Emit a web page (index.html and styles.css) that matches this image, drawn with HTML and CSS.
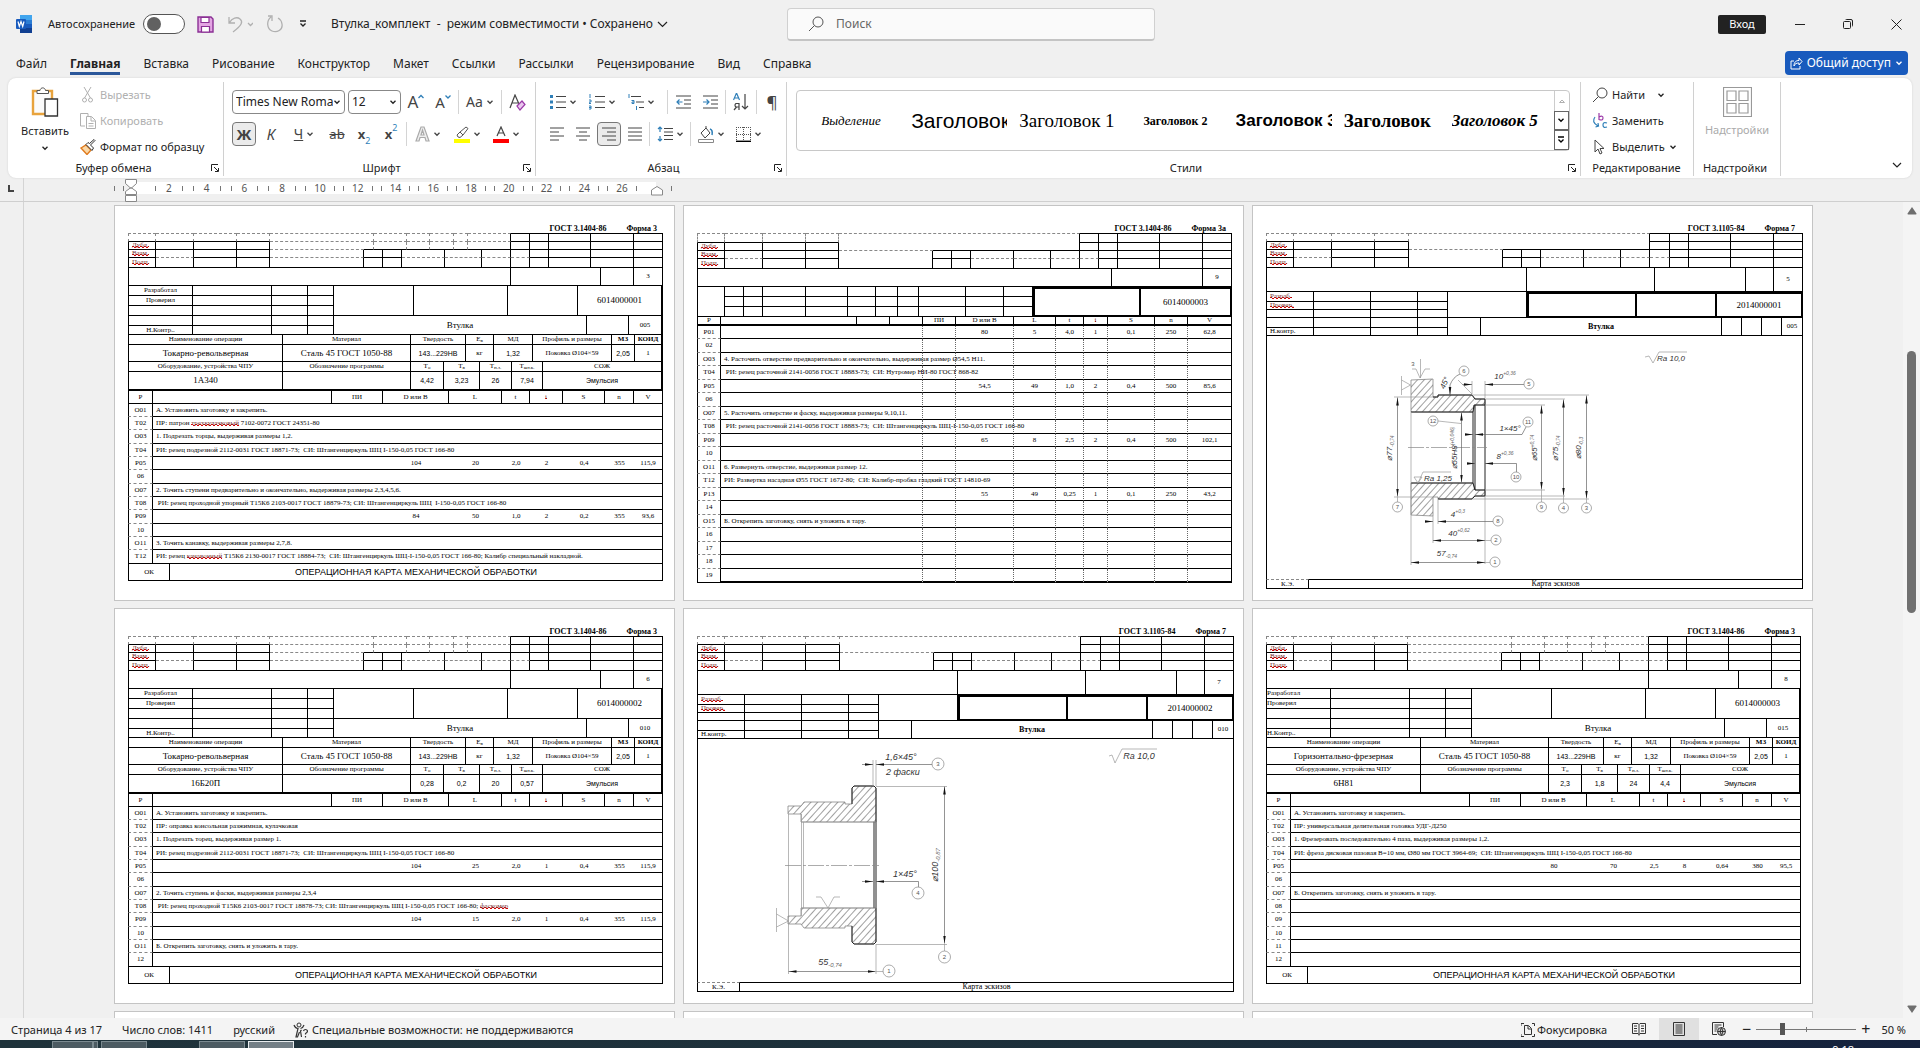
FILE: index.html
```html
<!DOCTYPE html>
<html lang="ru">
<head>
<meta charset="utf-8">
<title>Втулка_комплект</title>
<link rel="stylesheet" href="styles.css">
</head>
<body>
<svg class="defs" aria-hidden="true">
  <defs>
    <symbol id="chev" viewBox="0 0 8 8"><path d="M1.5 2.8 4 5.3 6.5 2.8" fill="none" stroke="currentColor" stroke-width="1.3"/></symbol>
    <symbol id="launch" viewBox="0 0 8 8"><path d="M.5 7V.5H7M3 3l4 4M7.5 4v3.5H4" fill="none" stroke="currentColor"/></symbol>
    <marker id="arr" viewBox="0 0 8 4" markerWidth="8" markerHeight="4" refX="8" refY="2" orient="auto-start-reverse" markerUnits="userSpaceOnUse"><path d="M0 .7 8 2 0 3.3z" fill="#111"/></marker>
    <pattern id="hatch" width="5" height="5" patternUnits="userSpaceOnUse" patternTransform="rotate(42)"><path d="M.5 0V5" stroke="#777" stroke-width=".7"/></pattern>
  </defs>
</svg>
<div class="app">
  <header class="titlebar">
    <div class="quick">
      <svg class="word" viewBox="0 0 16 18"><path d="M4 0h12v5H4z" fill="#41a5ee"/><path d="M4 5h12v4H4z" fill="#2b7cd3"/><path d="M4 9h12v4H4z" fill="#185abd"/><path d="M4 13h12v5H4z" fill="#103f91"/><rect y="4" width="10" height="10" rx="1" fill="#185abd"/><path d="m2 6.500 1.300 5 1.700-5 1.700 5 1.300-5" fill="none" stroke="#fff" stroke-width="1.200"/></svg>
      <label for="autosave">Автосохранение</label>
      <input class="toggle" type="checkbox" role="switch" id="autosave">
      <button class="icon" aria-label="Сохранить"><svg width="17" height="17" viewBox="0 0 17 17"><path d="M1 1h13l2 2v13H1z" fill="#e3a5e3" stroke="#8a2f94" stroke-width="1.400"/><path d="M4 1.500h8v5H4zM4.500 16v-5.500h8V16z" fill="#fff" stroke="#8a2f94" stroke-width="1.200"/></svg></button>
      <button class="icon dim" aria-label="Отменить"><svg width="26" height="18" viewBox="0 0 26 18"><path d="M2 2v6h6M2.500 7.500C5 3 10 1.500 13 4s2.500 6-7 13" fill="none" stroke="currentColor" stroke-width="1.300"/><path d="m21 8 2.500 2.500L26 8" fill="none" stroke="currentColor" stroke-width="1.300"/></svg></button>
      <button class="icon dim" aria-label="Повторить"><svg width="18" height="18" viewBox="0 0 18 18"><path d="M2 1h4v5M5 2C0 6 1 14 6 16s11-1 10-7c-.5-3-2-5-4-6" fill="none" stroke="currentColor" stroke-width="1.300"/></svg></button>
      <button class="icon" aria-label="Настройка панели"><svg width="8" height="8" viewBox="0 0 8 8"><path d="M1 1h6M1.500 3.500 4 6l2.500-2.500" fill="none" stroke="currentColor" stroke-width="1.300"/></svg></button>
    </div>
    <button class="doc-name">Втулка_комплект&nbsp; -&nbsp; режим совместимости • Сохранено <svg width="11" height="9" viewBox="0 0 11 9"><path d="m1 2 4.500 4.500L10 2" fill="none" stroke="currentColor" stroke-width="1.200"/></svg></button>
    <div class="search">
      <svg width="16" height="16" viewBox="0 0 16 16"><circle cx="10" cy="6" r="5" fill="none" stroke="#555"/><path d="M6.500 9.500 1 15" stroke="#555"/></svg>
      <input type="search" aria-label="Поиск" placeholder="Поиск">
    </div>
    <button class="login">Вход</button>
    <div class="window">
      <button class="icon" aria-label="Свернуть"><svg width="10" height="10" viewBox="0 0 10 10"><path d="M0 5.500h10" stroke="currentColor"/></svg></button>
      <button class="icon" aria-label="Восстановить"><svg width="10" height="10" viewBox="0 0 10 10"><path d="M.5 3.500q0-1 1-1h5q1 0 1 1v5q0 1-1 1h-5q-1 0-1-1zM2.500 1q.2-.5 1-.5H8q1.500 0 1.500 1.500v4.500q0 .8-.5 1" fill="none" stroke="currentColor"/></svg></button>
      <button class="icon" aria-label="Закрыть"><svg width="11" height="11" viewBox="0 0 11 11"><path d="m.5.5 10 10m0-10-10 10" stroke="currentColor"/></svg></button>
    </div>
  </header>

  <nav class="tabs">
    <a href="#file">Файл</a><a href="#home" class="current">Главная</a><a href="#insert">Вставка</a><a href="#draw">Рисование</a><a href="#design">Конструктор</a><a href="#layout">Макет</a><a href="#refs">Ссылки</a><a href="#mail">Рассылки</a><a href="#review">Рецензирование</a><a href="#view">Вид</a><a href="#help">Справка</a>
    <button class="share"><svg width="13" height="13" viewBox="0 0 13 13"><path d="M4 4H1v8h9V9M4 9c0-4 2-5.500 5-5.500V1l3 3.500L9 8V6C6.500 6 5 6.500 4 9z" fill="none" stroke="#fff"/></svg>Общий доступ<svg class="chev"><use href="#chev"/></svg></button>
  </nav>

  <div class="ribbon">
    <section class="group clipboard">
      <div class="body">
        <button class="paste"><svg width="28" height="31" viewBox="0 0 28 31"><path d="M2 4h19v23H2z" fill="#fbfbfb" stroke="#e8a33d" stroke-width="2.400"/><path d="M6 6.500V3.500h3C9.500 0 14 0 14.500 3.500h3v3z" fill="#fff" stroke="#555"/><path d="M14 12h12.500v17H14z" fill="#fff" stroke="#333" stroke-width="1.300"/></svg>Вставить<svg class="chev"><use href="#chev"/></svg></button>
        <div class="stack">
          <button class="row dim"><svg width="16" height="16" viewBox="0 0 16 16"><path d="M4 0l6.500 11M11 0 4.500 11" stroke="currentColor"/><circle cx="4.500" cy="13" r="2" fill="none" stroke="currentColor"/><circle cx="10.500" cy="13" r="2" fill="none" stroke="currentColor"/></svg>Вырезать</button>
          <button class="row dim"><svg width="16" height="16" viewBox="0 0 16 16"><path d="M5 13H.5V.5H8V4M6.500 3.500h5l4 4v8h-9zM11 4v4h4M8.500 10.500h5M8.500 13h5" fill="none" stroke="currentColor"/></svg>Копировать</button>
          <button class="row"><svg width="16" height="16" viewBox="0 0 16 16"><path d="M1 9l5-3 5 5-4 4.500z" fill="#fbd9a8" stroke="#e07a1c" stroke-width="1.400"/><path d="M6 5.500 12 11.500 13.500 9 10.500 6 15 1.500 14 .5 9.500 4.500 8 3.500z" fill="#fff" stroke="#333"/></svg>Формат по образцу</button>
        </div>
      </div>
      <footer>Буфер обмена<svg class="launch"><use href="#launch"/></svg></footer>
    </section>

    <section class="group font">
      <div class="body">
        <div class="tools">
          <div class="pick family"><select aria-label="Шрифт"><option>Times New Roman</option></select><svg class="chev"><use href="#chev"/></svg></div>
          <div class="pick size"><select aria-label="Размер"><option>12</option></select><svg class="chev"><use href="#chev"/></svg></div>
          <button class="t big" aria-label="Увеличить размер">A<svg class="caret" viewBox="0 0 6 6"><path d="M.5 4 3 1.500 5.500 4" fill="none" stroke="#2f7fb8" stroke-width="1.300"/></svg></button>
          <button class="t" aria-label="Уменьшить размер">A<svg class="caret" viewBox="0 0 6 6"><path d="M.5 1.500 3 4l2.500-2.500" fill="none" stroke="#2f7fb8" stroke-width="1.300"/></svg></button>
          <i class="sep"></i>
          <button class="t wide">Aa<svg class="chev"><use href="#chev"/></svg></button>
          <i class="sep"></i>
          <button class="t" aria-label="Очистить формат"><svg width="17" height="17" viewBox="0 0 17 17"><path d="M1 14 6 1l4 9M3 9h6" fill="none" stroke="#444" stroke-width="1.200"/><path d="m8 12 5-5 3 3.500-5 5.500z" fill="#e9c7ee" stroke="#9b3aa8" stroke-width="1.200"/></svg></button>
        </div>
        <div class="tools">
          <button class="t on"><b>Ж</b></button>
          <button class="t"><em>К</em></button>
          <button class="t wide"><u>Ч</u><svg class="chev"><use href="#chev"/></svg></button>
          <button class="t small"><s>ab</s></button>
          <button class="t small"><b>x</b><sub class="blue">2</sub></button>
          <button class="t small"><b>x</b><sup class="blue">2</sup></button>
          <i class="sep"></i>
          <button class="t wide dim" aria-label="Эффекты"><svg width="15" height="16" viewBox="0 0 15 16"><path d="m1 15 5-14h3l5 14h-3l-1-3.500H5L4 15zM6 9h3L7.500 4z" fill="#eee" stroke="#aaa" stroke-width="1.200"/></svg><svg class="chev"><use href="#chev"/></svg></button>
          <button class="t wide" aria-label="Цвет выделения"><svg width="16" height="17" viewBox="0 0 16 17"><path d="M4 11 3 9l3-3 3 3-3 2.500zM6 6l6-5 2 1.500L9 9" fill="#fff" stroke="#555"/><path d="M0 13h16v4H0z" fill="#ff0"/></svg><svg class="chev"><use href="#chev"/></svg></button>
          <button class="t wide" aria-label="Цвет текста"><svg width="16" height="17" viewBox="0 0 16 17"><path d="m4 10 4-9 4 9M5.500 7h5" fill="none" stroke="#444" stroke-width="1.200"/><path d="M0 13h16v4H0z" fill="#f00"/></svg><svg class="chev"><use href="#chev"/></svg></button>
        </div>
      </div>
      <footer>Шрифт<svg class="launch"><use href="#launch"/></svg></footer>
    </section>

    <section class="group para">
      <div class="body">
        <div class="tools">
          <button class="t wide" aria-label="Маркеры"><svg width="16" height="16" viewBox="0 0 16 16"><path d="M0 1h3v3H0zM0 6.500h3v3H0zM0 12h3v3H0z" fill="#2f7fb8"/><path d="M6 2.500h10M6 8h10M6 13.500h10" stroke="#444"/></svg><svg class="chev"><use href="#chev"/></svg></button>
          <button class="t wide" aria-label="Нумерация"><svg width="16" height="16" viewBox="0 0 16 16"><path d="M1 0v4M0 6h2v2H0v1.500h2M0 12h2v3H0M0 13.500h2" fill="none" stroke="#2f7fb8"/><path d="M6 2.500h10M6 8h10M6 13.500h10" stroke="#444"/></svg><svg class="chev"><use href="#chev"/></svg></button>
          <button class="t wide" aria-label="Многоуровневый список"><svg width="16" height="16" viewBox="0 0 16 16"><path d="M1 0v4M3.500 6.500h2.500v3H4V8h2M8.500 12v4" fill="none" stroke="#2f7fb8"/><path d="M3 2.500h10M8 8h8M11 13.500h5" stroke="#444"/></svg><svg class="chev"><use href="#chev"/></svg></button>
          <i class="sep far"></i>
          <button class="t" aria-label="Уменьшить отступ"><svg width="15" height="14" viewBox="0 0 15 14"><path d="M0 1h15M8 5h7M8 9h7M0 13h15" stroke="#444"/><path d="M6.500 7H1M3.500 4.500 1 7l2.500 2.500" fill="none" stroke="#2f7fb8" stroke-width="1.200"/></svg></button>
          <button class="t" aria-label="Увеличить отступ"><svg width="15" height="14" viewBox="0 0 15 14"><path d="M0 1h15M8 5h7M8 9h7M0 13h15" stroke="#444"/><path d="M0 7h6M3.500 4.500 6 7 3.500 9.500" fill="none" stroke="#2f7fb8" stroke-width="1.200"/></svg></button>
          <i class="sep"></i>
          <button class="t" aria-label="Сортировка"><svg width="16" height="18" viewBox="0 0 16 18"><path d="m.5 7 3-7 3 7M1.500 5h4" fill="none" stroke="#2f7fb8" stroke-width="1.200"/><path d="M6 17v-6.500H3q-2 1.500 0 3.500h3M3.500 14 1 17M12 1v15M9 13l3 3 3-3" fill="none" stroke="#444" stroke-width="1.200"/></svg></button>
          <i class="sep"></i>
          <button class="t big">¶</button>
        </div>
        <div class="tools tight">
          <button class="t" aria-label="По левому краю"><svg width="15" height="14" viewBox="0 0 15 14"><path d="M0 1h14M0 5h9M0 9h14M0 13h9" stroke="#444"/></svg></button>
          <button class="t" aria-label="По центру"><svg width="15" height="14" viewBox="0 0 15 14"><path d="M0 1h14M3 5h8M0 9h14M3 13h8" stroke="#444"/></svg></button>
          <button class="t on" aria-label="По правому краю"><svg width="15" height="14" viewBox="0 0 15 14"><path d="M0 1h14M5 5h9M0 9h14M5 13h9" stroke="#444"/></svg></button>
          <button class="t" aria-label="По ширине"><svg width="15" height="14" viewBox="0 0 15 14"><path d="M0 1h14M0 5h14M0 9h14M0 13h14" stroke="#444"/></svg></button>
          <i class="sep"></i>
          <button class="t wide" aria-label="Интервал"><svg width="16" height="16" viewBox="0 0 16 16"><path d="M3 1v5M1 3l2-2 2 2M3 15v-5M1 13l2 2 2-2" fill="none" stroke="#2f7fb8" stroke-width="1.200"/><path d="M7 2.500h9M7 6h9M7 9.500h9M7 13.500h9" stroke="#444"/></svg><svg class="chev"><use href="#chev"/></svg></button>
          <i class="sep"></i>
          <button class="t wide" aria-label="Заливка"><svg width="16" height="17" viewBox="0 0 16 17"><path d="M3 7 8 2l4 5-5 5zM8 2V0" fill="#fff" stroke="#444"/><path d="M12 3q3 1 2 6" fill="none" stroke="#2f7fb8" stroke-width="1.500"/><path d="M.5 13.500h15v3H.5z" fill="#fff" stroke="#888"/></svg><svg class="chev"><use href="#chev"/></svg></button>
          <button class="t wide" aria-label="Границы"><svg width="15" height="15" viewBox="0 0 15 15"><path d="M.5 0v14M7.500 0v14M14.500 0v14M0 .5h15M0 7.500h15" stroke="#555" stroke-dasharray="1 1"/><path d="M0 14.300h15" stroke="#000" stroke-width="1.400"/></svg><svg class="chev"><use href="#chev"/></svg></button>
        </div>
      </div>
      <footer>Абзац<svg class="launch"><use href="#launch"/></svg></footer>
    </section>

    <section class="group styles">
      <div class="gallery">
        <button class="s-em">Выделение</button>
        <button class="s-title">Заголовок</button>
        <button class="s-h1">Заголовок 1</button>
        <button class="s-h2">Заголовок 2</button>
        <button class="s-h3">Заголовок 3</button>
        <button class="s-h4">Заголовок</button>
        <button class="s-h5">Заголовок 5</button>
        <div class="more">
          <button class="dim" aria-label="Вверх"><svg width="8" height="8" viewBox="0 0 8 8"><path d="M1.500 5.500 4 3l2.500 2.500z" fill="none" stroke="currentColor"/></svg></button>
          <button aria-label="Вниз"><svg class="chev"><use href="#chev"/></svg></button>
          <button aria-label="Все стили"><svg width="8" height="8" viewBox="0 0 8 8"><path d="M1 1h6M1.500 3.500 4 6l2.500-2.500" fill="none" stroke="currentColor" stroke-width="1.300"/></svg></button>
        </div>
      </div>
      <footer>Стили<svg class="launch"><use href="#launch"/></svg></footer>
    </section>

    <section class="group edit">
      <div class="stack">
        <button class="row gap"><svg width="16" height="16" viewBox="0 0 16 16"><circle cx="10" cy="6" r="5" fill="none" stroke="#444"/><path d="M6.500 9.500 1 15" stroke="#444"/></svg>Найти<svg class="chev"><use href="#chev"/></svg></button>
        <button class="row"><svg width="16" height="16" viewBox="0 0 16 16"><path d="M7 0v7M7 4q4-2 4 1t-4 1.500" fill="none" stroke="#9b3aa8" stroke-width="1.200"/><path d="M15 10q-4-1.500-4 2t4 2M3 4q-4 5 3 9M3.500 14l3-1-.5-3" fill="none" stroke="#2f7fb8" stroke-width="1.200"/></svg>Заменить</button>
        <button class="row"><svg width="16" height="16" viewBox="0 0 16 16"><path d="M3 1v12l3-3 2 5 2-1-2-4.500h4z" fill="#fff" stroke="#444"/></svg>Выделить<svg class="chev"><use href="#chev"/></svg></button>
      </div>
      <footer>Редактирование</footer>
    </section>

    <section class="group addins">
      <button class="paste dim"><svg width="29" height="30" viewBox="0 0 29 30"><path d="M.5.5h28v29H.5zM4 4h9v9.500H4zM16 4h9v9.500h-9zM4 16.500h9V26H4zM16 16.500h9V26h-9z" fill="none" stroke="#999" stroke-width="1.200"/></svg>Надстройки</button>
      <footer>Надстройки</footer>
    </section>
    <button class="collapse" aria-label="Свернуть ленту"><svg width="10" height="8" viewBox="0 0 10 8"><path d="m1 2 4 4 4-4" fill="none" stroke="currentColor" stroke-width="1.200"/></svg></button>
  </div>

  <div class="ruler">
    <div class="corner"><svg width="6" height="7" viewBox="0 0 6 7"><path d="M1 0v6h5" fill="none" stroke="#444" stroke-width="2"/></svg></div>
    <div class="scale">
      <span class="tick"></span><span class="tick"></span>
      <div class="numbers"><svg class="indent" viewBox="0 0 14 24"><path d="M1.500.5h11v4L7 9.500l-5.500-5zM1.500 15.500v-3L7 8.500l5.500 4v3zM1.500 16.500h11v6h-11z" fill="#fff" stroke="#888"/></svg><span>2</span><span>4</span><span>6</span><span>8</span><span>10</span><span>12</span><span>14</span><span>16</span><span>18</span><span>20</span><span>22</span><span>24</span><span>26</span><svg class="right-indent" viewBox="0 0 14 10"><path d="M1.500 9V4L7 .5 12.500 4v5z" fill="#fff" stroke="#888"/></svg></div>
      <span class="tick"></span>
    </div>
  </div>

  <main class="canvas">
    <div class="side"></div>
    <div class="view"><div class="pages" id="pages"></div></div>
    <div class="scroll">
      <svg width="10" height="8" viewBox="0 0 10 8"><path d="M5 0 9.500 6.500q.3 1-.8 1H1.300q-1 0-.8-1z" fill="#6e6e6e"/></svg>
      <div class="thumb"></div>
      <svg width="10" height="8" viewBox="0 0 10 8"><path d="M5 8 9.500 1.500q.3-1-.8-1H1.300q-1 0-.8 1z" fill="#6e6e6e"/></svg>
    </div>
  </main>

  <footer class="status">
    <button>Страница 4 из 17</button>
    <button>Число слов: 1411</button>
    <button>русский</button>
    <button class="access"><svg width="15" height="16" viewBox="0 0 15 16"><circle cx="6" cy="3" r="2" fill="none" stroke="#333"/><path d="M1 3q1 3 4 3.500L3 15h1.500L6.500 10M11 3Q10 6 7.500 6.500M8.500 8l-1 1 1 6M10.500 9q.5-1.500 2-1.500t2 1.500q0 1.500-2 2.500v1M12.500 14v1.500" fill="none" stroke="#333" stroke-width="1.200"/></svg>Специальные возможности: не поддерживаются</button>
    <button class="focus"><svg width="14" height="14" viewBox="0 0 14 14"><path d="M0 3V.5h3M11 .5h2.500V3M0 11v2.500h3M11 13.500h2.500V11M3.500 2.500h4l3 3v6h-7zM7 3v3h3" fill="none" stroke="#333"/></svg>Фокусировка</button>
    <div class="modes">
      <button aria-label="Режим чтения"><svg width="14" height="14" viewBox="0 0 14 14"><path d="M7 2.500 6 1.500H.5v10H6l1 1 1-1h5.500v-10H8zM7 2.500v11M2 4h3M2 6.500h3M2 9h3M9 4h3M9 6.500h3M9 9h3" fill="none" stroke="#333"/></svg></button>
      <button class="active" aria-label="Разметка страницы"><svg width="12" height="14" viewBox="0 0 12 14"><path d="M.5.5h11v13H.5zM2.500 3h7M2.500 5h7M2.500 7h7M2.500 9h7M2.500 11h7" fill="none" stroke="#333"/></svg></button>
      <button aria-label="Веб-документ"><svg width="14" height="14" viewBox="0 0 14 14"><path d="M5 12.500H.5V.5h11V5M2.500 3h7M2.500 5h4M2.500 7h3M2.500 9h2" fill="none" stroke="#333"/><circle cx="9.500" cy="9.500" r="4" fill="#ccc" stroke="#333"/><path d="M5.500 9.500h8M9.500 5.500q-3 4 0 8 3-4 0-8" fill="none" stroke="#333"/></svg></button>
    </div>
    <div class="zoom">
      <button aria-label="Уменьшить">−</button>
      <input type="range" min="10" max="190" value="55" aria-label="Масштаб">
      <button aria-label="Увеличить">+</button>
    </div>
    <button class="percent">50 %</button>
  </footer>
  <div class="taskbar"><i class="t1"></i><i class="t2"></i><i class="t3"></i><i class="t4"></i><i class="t5 live"></i><time>9:18</time></div>
</div>

<template id="sketch-1">
  <svg class="sketch" width="535" height="242" viewBox="0 0 535 242">
    <g class="cut"><path d="M144 43 166 42V60H171V58H205L208 62H218V68H208L206 75H144z"/><path d="M144 146H206L208 153H218V159H208L205 162H171V160H166V179L144 178z"/></g>
    <path class="edge" d="M144 75h62l1-7h11M144 146h62l2 7h10M171 58h34l3 4h10v97h-10l-3 3h-34M166 60h5v-2M206 75v71M208 68v85"/>
    <path class="thin" d="M144 75v153M218 159v68M166 179v27M171 162v25M127 60h39M127 160h39M205 58h117M218 62h80M218 68h60M218 153h60M218 159h80M205 162h117M205 44v13M218 44v17"/>
    <path class="axis" d="M141 110.500h79"/>
    <g class="dim"><path d="M130.500 60.500v99"/><path d="M194.500 75.500v70"/><path d="M274.500 68.500v84"/><path d="M296.500 62.500v96"/><path d="M319.500 58.500v103"/><path d="M166 203.500h52"/><path d="M144 225.500h74"/></g>
    <g class="out"><path d="M158 184.500h8"/><path d="M226 184.500h-55"/><path d="M195 47.500h10"/><path d="M257 47.500h-39"/><path d="M200 97.500h6"/><path d="M259 90l-4 7.500h-47"/><path d="M200 126.500h8"/><path d="M249.500 136v-9.500H218"/><path d="M193 37q-7 3-10 11v10"/></g>
    <path class="thin" d="M130.500 160v5M274.500 153v12M296.500 159v7M319.500 162v5M218 203.500h6M218 225.500h5M171 84l23 2.500M191 43l14 14M153.500 22v19M145 32h4l4 9 5-9h5M134.500 39v19M134.500 43l9 5-9 5M147 140h8l-4 6zM151 146l5-11h28M378 20l4-1 4 7 6-11h28"/>
    <g class="ball"><circle cx="130.500" cy="170" r="5"/><circle cx="166" cy="84" r="5"/><circle cx="261" cy="85" r="5"/><circle cx="249" cy="140" r="5"/><circle cx="274.500" cy="170" r="5"/><circle cx="296.500" cy="171" r="5"/><circle cx="319.500" cy="171" r="5"/><circle cx="262" cy="47" r="5"/><circle cx="197" cy="34" r="5"/><circle cx="231" cy="184" r="5"/><circle cx="229" cy="203" r="5"/><circle cx="228" cy="225" r="5"/></g>
    <g class="num"><text x="130.500" y="172">7</text><text x="166" y="86">12</text><text x="261" y="87">11</text><text x="249" y="142">10</text><text x="274.500" y="172">9</text><text x="296.500" y="173">4</text><text x="319.500" y="173">3</text><text x="262" y="49">5</text><text x="197" y="36">6</text><text x="231" y="186">8</text><text x="229" y="205">2</text><text x="228" y="227">1</text><text x="146" y="29">3</text></g>
    <g class="size"><text x="404" y="24">Ra 10,0</text><text x="171" y="144">Ra 1,25</text><text x="243" y="94">1×45°</text>
      <text x="238" y="42">10<tspan class="tol" dy="-4">+0,36</tspan></text><text x="238" y="122">8<tspan class="tol" dy="-4">+0,36</tspan></text><text x="191" y="180">4<tspan class="tol" dy="-4">+0,3</tspan></text><text x="192" y="199">40<tspan class="tol" dy="-4">+0,62</tspan></text><text x="180" y="219">57<tspan class="tol" dy="2">-0,74</tspan></text>
      <text transform="translate(125 111) rotate(-90)">⌀77<tspan class="tol" dy="2">-0,74</tspan></text><text transform="translate(190 111) rotate(-90)">⌀55H8<tspan class="tol" dy="-3">(+0,046)</tspan></text><text transform="translate(270 111) rotate(-90)">⌀65<tspan class="tol" dy="-3">+0,74</tspan></text><text transform="translate(291 111) rotate(-90)">⌀75<tspan class="tol" dy="2">-0,74</tspan></text><text transform="translate(314 111) rotate(-90)">⌀80<tspan class="tol" dy="2">-0,3</tspan></text><text transform="translate(180 47) rotate(-65)">45°</text></g>
  </svg>
</template>
<template id="sketch-2">
  <svg class="sketch" width="535" height="242" viewBox="0 0 535 242">
    <g class="cut"><path d="M90 66H103L106 62H147V64H154V48L156 46H176L178 48V82H103V74H90z"/><path d="M90 184H103L106 188H147V186H154V202L156 204H176L178 202V168H103V176H90z"/></g>
    <path class="edge" d="M154 64V48l2-2h20l2 2v154l-2 2h-20l-2-2v-16M176 82v86"/>
    <path class="thin" d="M103 82h75M103 168h75M90.500 74v160M103.500 74v102M105.500 82v86M178 204v30M178 46.500h71M178 204.500h71M175 20v26M178 20v26M246.500 204v8M178 231.500h9M118 157h5l7 11 6-11h6M78.500 168v24M78.500 174l12 7-12 6M411 16l3-1 3 8 7-14h35"/>
    <path class="axis" d="M87 125.500h94"/>
    <g class="dim"><path d="M246.500 46.500v157"/><path d="M90.500 231.500h87"/></g>
    <g class="out"><path d="M164 24.500h11"/><path d="M235 24.500h-57"/><path d="M164 141.500h11"/><path d="M220.500 148v-6.500H178"/></g>
    <g class="ball"><circle cx="240" cy="24" r="6"/><circle cx="220" cy="153" r="6"/><circle cx="246.500" cy="217" r="6"/><circle cx="191" cy="231" r="6"/></g>
    <g class="num"><text x="240" y="26">3</text><text x="220" y="155">4</text><text x="246.500" y="219">2</text><text x="191" y="233">1</text></g>
    <g class="size large"><text x="441" y="19">Ra 10,0</text><text x="203" y="20">1,6×45°</text><text x="205" y="35">2 фаски</text><text x="207" y="137">1×45°</text><text x="132" y="225">55<tspan class="tol" dy="2">-0,74</tspan></text><text transform="translate(240 125) rotate(-90)">⌀100<tspan class="tol" dy="2">-0,87</tspan></text></g>
  </svg>
</template>
<script src="forms.js"></script>
</body>
</html>
```

FILE: styles.css
```css
* { box-sizing: border-box; }
body { margin: 0; background: #f0f0f0; color: #222; font: 12px/16px "Noto Sans", "Open Sans", sans-serif; }
button, input, select { font: inherit; color: inherit; margin: 0; padding: 0; border: 0; background: none; }
button { display: inline-flex; align-items: center; justify-content: center; white-space: nowrap; }
.defs { position: absolute; width: 0; height: 0; }
.app { display: flex; flex-direction: column; height: 100vh; overflow: hidden; }
.chev { width: 8px; height: 8px; flex: none; }
.dim { color: #b0b0b0; }
.blue { color: #2f7fb8; }

.titlebar { display: grid; grid-template-columns: 315px 456px 368px 1fr auto auto; align-items: center; height: 48px; padding: 0 18px 0 16px; }
.quick { display: flex; align-items: center; padding-right: 8px; font-size: 11px; }
.word { width: 16px; height: 18px; margin-right: 16px; }
.toggle { appearance: none; width: 42px; height: 20px; margin: 0 12px 0 8px; border: 1px solid #555; border-radius: 10px; background: #fff; display: flex; align-items: center; padding: 0 3px; }
.toggle::before { content: ""; width: 14px; height: 14px; border-radius: 50%; background: #616161; }
.quick .icon { margin-right: 13px; }
.quick .icon:last-child { margin: 0 0 0 2px; }
.doc-name { justify-self: start; gap: 4px; }
.search { display: flex; align-items: center; gap: 12px; height: 33px; padding: 0 20px; border: 1px solid #d0d0d0; border-bottom: 2px solid #c4c4c4; border-radius: 4px; background: #fafafa; }
.search input { flex: 1; outline: none; }
.search input::placeholder { color: #666; }
.login { grid-column: 5; width: 48px; height: 19px; background: #222; color: #fff; border-radius: 2px; font-size: 11px; }
.window { display: flex; gap: 38px; padding-left: 29px; }

.tabs { display: flex; align-items: stretch; height: 30px; padding: 0 12px 3px 16px; gap: 23px; }
.tabs a { color: #222; text-decoration: none; padding-top: 8px; border-bottom: 3px solid transparent; }
.tabs .current { font-weight: 700; border-color: #2b579a; }
.share { margin: 3px 0 0 auto; height: 24px; padding: 0 5px; gap: 4px; border-radius: 4px; background: #185abd; color: #fff; }

.ribbon { display: flex; height: 100px; margin: 0 8px; border-radius: 8px; background: #fff; box-shadow: 0 0 2px #ccc; font-size: 11px; }
.group { display: flex; flex-direction: column; margin: 4px 0 2px; border-right: 1px solid #d0d0d0; }
.group footer { text-align: center; height: 16px; margin-top: auto; padding-right: 4px; position: relative; flex: none; }
.launch { position: absolute; right: 4px; top: 4px; width: 8px; height: 8px; }
.clipboard { width: 216px; }
.clipboard .body { display: flex; }
.paste { flex-direction: column; width: 60px; margin-left: 7px; padding-top: 5px; gap: 5px; justify-content: flex-start; }
.stack { display: flex; flex-direction: column; }
.row { height: 26px; gap: 4px; justify-content: flex-start; }
.clipboard .row { padding-left: 5px; }
.row.gap .chev { margin-left: 8px; }
.row svg { flex: none; }
.font { width: 312px; padding-left: 8px; }
.para { width: 251px; padding-left: 9px; }
.tools { display: flex; align-items: center; gap: 3px; height: 24px; margin-top: 8px; }
.tools.tight { gap: 2px; }
.sep { width: 1px; height: 24px; background: #d4d4d4; }
.sep.far { margin-left: 5px; }
.t { width: 24px; height: 24px; border-radius: 4px; font-size: 15px; color: #444; flex: none; }
.t.wide { width: 36px; gap: 3px; font-size: 14px; }
.t.wide svg:first-child { flex: none; }
.t.small { font-size: 13px; }
.t.big { font-size: 17px; }
.t.on { background: #ebebeb; border: 1px solid #777; }
.t sub, .t sup { font-size: 9px; line-height: 9px; }
.t sub { align-self: flex-end; padding-bottom: 1px; }
.t sup { align-self: flex-start; padding-top: 1px; }
.caret { width: 6px; height: 6px; align-self: flex-start; margin-top: 4px; }
.pick { display: flex; align-items: center; height: 24px; padding: 0 3px; border: 1px solid #888; border-radius: 4px; background: #fff; font-size: 12px; }
.pick select { appearance: none; flex: 1; min-width: 0; overflow: hidden; white-space: nowrap; text-overflow: clip; outline: none; }
.family { width: 113px; }
.size { width: 53px; }

.styles { flex: 1; padding: 8px 10px 0 9px; }
.styles footer { margin-right: -10px; }
.gallery { display: flex; height: 61px; border: 1px solid #c8c8c8; border-radius: 4px; font-family: "Liberation Serif", serif; color: #000; }
.gallery > button { flex: 1; min-width: 0; margin: 0 6px; overflow: hidden; justify-content: flex-start; line-height: 24px; }
.s-em { font-style: italic; font-size: 13px; }
.gallery .s-em, .gallery .s-h2 { justify-content: center; }
.s-title { font: 21px "Liberation Sans", sans-serif; }
.s-h1 { font-size: 19px; }
.s-h2 { font-weight: 700; font-size: 12px; }
.s-h3 { font: 700 17px "Liberation Sans", sans-serif; }
.s-h4 { font-weight: 700; font-size: 19px; }
.s-h5 { font-weight: 700; font-style: italic; font-size: 17px; }
.more { display: grid; grid-template-rows: 1fr 1fr 1fr; width: 15px; }
.more button { border: 1px solid #666; }
.more .dim { border-color: #ccc; border-width: 0 0 0 1px; }
.edit { width: 113px; padding-left: 11px; }
.edit footer { margin-left: -8px; }
.addins { width: 87px; }
.addins .paste { width: 86px; margin: 0; color: #aaa; }
.collapse { margin: auto 10px 9px 111px; }

.ruler { display: grid; grid-template-columns: 24px 1fr 17px; height: 24px; border-bottom: 1px solid #cfcfcf; font-size: 10px; line-height: 12px; color: #555; }
.corner { display: flex; align-items: center; justify-content: center; border-right: 1px solid #d4d4d4; padding: 0 2px 2px 0; }
.scale { display: flex; align-items: center; width: 1699px; margin: 0 auto; padding-bottom: 3px; }
.tick { width: 1px; height: 5px; background: #777; margin-right: 8px; }
.numbers { position: relative; display: flex; width: 525px; height: 12px; margin-left: -1px; padding: 0 15px 0 19px; background: #fff; }
.numbers span { flex: 1; display: flex; align-items: center; justify-content: space-around; }
.numbers span::before, .numbers span::after { content: ""; width: 1px; height: 5px; background: #777; }
.numbers + .tick { margin-left: 15px; }
.indent { position: absolute; left: -7px; top: -3px; width: 14px; height: 24px; }
.right-indent { position: absolute; right: -8px; top: 4px; width: 14px; height: 10px; }

.canvas { flex: 1; min-height: 0; display: grid; grid-template-columns: 24px 1fr 17px; }
.side { border-right: 1px solid #d4d4d4; }
.view { overflow: hidden; padding-top: 3px; min-height: 0; }
.pages { display: grid; grid-template-columns: repeat(3, 561px); gap: 7px 8px; justify-content: center; }
.scroll { display: flex; flex-direction: column; align-items: center; justify-content: space-between; padding: 5px 0; background: #f4f4f4; min-height: 0; }
.thumb { width: 9px; height: 262px; border-radius: 5px; background: #707070; margin-bottom: 256px; }

.page { height: 396px; border: 1px solid #c4c4c4; background: #fff; padding: 18px 10px 0 13px; color: #000; font: 7px/7px "Liberation Serif", serif; overflow: hidden; }
.caption { display: flex; justify-content: flex-end; gap: 20px; font-size: 8px; font-weight: 700; line-height: 9px; padding-right: 7px; }
.page table { border-collapse: separate; border-spacing: 0; table-layout: fixed; width: 535px; }
.page .sheet table { width: 537px; }
.page td { padding: 0 1px; border: 0 solid #000; border-right-width: 1px; border-bottom-width: 1px; text-align: center; vertical-align: middle; white-space: nowrap; }
.page td:first-child { border-left-width: 1px; }
.page td.ln { border-left-width: 0; }
.page td.ld { border-left: 1px dashed #888; }
.page td.rn { border-right-width: 0; }
.page td.rd { border-right: 1px dashed #888; }
.page td.rt { border-right: 1px dotted #666; }
.page td.bn { border-bottom-width: 0; }
.page td.bd { border-bottom: 1px dashed #888; }
.page td.td { border-top: 1px dashed #888; }
.page td.ts { border-top: 1px solid #000; }
.page td.r2 { border-right-width: 2px; }
.page td.b2 { border-bottom-width: 2px; }
.page td.box { border-width: 2px; }
.page td.nl { border-left-width: 0; }
.page td.lt { text-align: left; padding-left: 3px; }
.page td.flush { text-align: left; padding-left: 0; }
.page td.tag { text-align: left; padding-left: 3px; }
.page .m { font-size: 8px; line-height: 8px; }
.page .x { font-size: 9px; line-height: 9px; }
.page .b { font-weight: 700; }
.page .a { font-family: "Liberation Sans", sans-serif; }
.page sub { font-size: 5px; line-height: 5px; vertical-align: -1px; }
.page mark { display: inline-block; height: 7px; color: #733; background: repeating-linear-gradient(90deg, #d00 0 2px, transparent 2px 4px) 0 4px / 100% 1px no-repeat, repeating-linear-gradient(90deg, transparent 0 2px, #d00 2px 4px) 0 5px / 100% 1px no-repeat; }
.page .area td { height: 243px; padding: 0; }

.sketch { display: block; }
.sketch path, .sketch circle { fill: none; stroke: #888; stroke-width: .7; }
.sketch .cut path { fill: url(#hatch); stroke: #777; }
.sketch .edge { stroke: #222; stroke-width: 1; }
.sketch .thin { stroke: #999; }
.sketch .axis { stroke-dasharray: 16 2 3 2; }
.sketch .dim path { stroke: #666; marker-start: url(#arr); marker-end: url(#arr); }
.sketch .out path { stroke: #666; marker-end: url(#arr); }
.sketch .ball circle { fill: #fff; }
.sketch text { font-family: "Liberation Sans Narrow", "Liberation Sans", sans-serif; font-style: italic; text-anchor: middle; fill: #333; }
.sketch .num text { font-size: 6px; font-style: normal; fill: #555; }
.sketch .size text { font-size: 8px; }
.sketch .large text { font-size: 9px; }
.sketch .size .tol { font-size: 5px; fill: #666; }
.sketch .large .tol { font-size: 6px; }

.status { display: flex; align-items: center; height: 22px; padding: 0 14px 0 11px; background: #f4f4f4; font-size: 11px; }
.status > button { margin-right: 20px; padding-top: 1px; }
.status .access { gap: 4px; margin: 0 auto 0 -2px; }
.status .focus { gap: 2px; margin-right: 12px; }
.modes { display: flex; align-self: stretch; }
.modes button { width: 40px; }
.modes .active { background: #e0e0e0; }
.zoom { display: flex; align-items: center; gap: 3px; margin: 0 11px 0 3px; font-size: 16px; }
.zoom input { appearance: none; width: 100px; height: 16px; margin: 0 2px; background: linear-gradient(#777, #777) center / 1px 5px no-repeat, linear-gradient(#777, #777) center / 100% 1px no-repeat; }
.zoom input::-webkit-slider-thumb { appearance: none; width: 5px; height: 12px; background: #555; }
.status .percent { margin: 0; }
.taskbar { display: flex; height: 8px; padding: 1px 66px 0 52px; background: linear-gradient(90deg, #1f333b, #1c2f3a 60%, #14213d); overflow: hidden; }
.taskbar i { border: 1px solid #7b8a90; border-bottom: 0; background: #4c5b62; margin-right: 3px; }
.taskbar .t1 { width: 41px; margin-right: 0; }
.taskbar .t2 { width: 5px; }
.taskbar .t3 { width: 46px; margin-right: 52px; }
.taskbar .t4 { width: 46px; }
.taskbar .t5 { width: 46px; }
.taskbar .live { background: #737f86; border-color: #e8ecee; }
.taskbar time { margin-left: auto; color: #fff; font-size: 11px; line-height: 16px; padding-top: 1px; }
```

FILE: forms.js
```js
// A strip is a list of rows: [height, cell, cell, ...].
// A cell is "from-to|text|classes|rowspan", positions in form units.
function strip(rows, width, cls) {
  const k = width / 534;
  const cells = rows.map(r => r.slice(1).map(c => {
    const [range, text = '', classes = '', span = 1] = c.split('|');
    const [from, to] = range.split('-').map(Number);
    return { from, to, text, classes, span };
  }));
  const stops = [...new Set(cells.flat().flatMap(c => [c.from, c.to]))].sort((a, b) => a - b);
  // Every line sits one pixel after its stop, so the first column carries the left border.
  const at = v => v ? Math.round(v * k) + 1 : 0;
  const cols = stops.slice(1).map((s, i) => `<col style="width:${at(s) - at(stops[i])}px">`).join('');
  const body = rows.map((r, i) => `<tr style="height:${r[0]}px">` + cells[i].map(c =>
    `<td colspan="${stops.indexOf(c.to) - stops.indexOf(c.from)}" rowspan="${c.span}" class="${c.classes}">${c.text}</td>`
  ).join('') + '</tr>').join('');
  return `<table class="${cls || ''}"><colgroup>${cols}</colgroup><tbody>${body}</tbody></table>`;
}

const tail = cls => ['382-401', '401-420', '420-462', '462-505', '505-534'].map(c => c + '||' + cls);

function stamp(full, number, last, tall) {
  const first = ['0-27||ld td rd', '27-65||td rd', '65-108||td rd', '108-141||td rd'];
  const mid1 = full
    ? ['141-245||td rd bd', '245-278||td rd bd', '278-301||td rd bd', '301-325||td rd bd', '325-339||td rd bd', '339-382||td bd']
    : ['141-382||td bn'];
  const mid2 = full
    ? ['141-235||rn bd', '235-245||rd', '245-278||rd', '278-301||rd', '301-325||rd', '325-339||rd', '339-382']
    : ['141-235||rn bd', '235-382'];
  const grid = ['235-254', '254-273'];
  return [
    [tall ? 10 : 9, ...first, ...mid1, ...tail('ts')],
    [8, '0-27|<mark>Дубл.</mark>|tag', '27-65', '65-108', '108-141', ...mid2, ...tail('')],
    [8, '0-27|<mark>Взам.</mark>|tag', '27-65||bd', '65-108', '108-141', full ? '141-235||bd' : '141-235||bn', ...grid,
      '273-316||bd', '316-353||bd', '353-382||bd', '382-401||bd', ...tail('').slice(1)],
    [10, '0-27|<mark>Подп.</mark>|tag', '27-65', '65-108', '108-141', '141-235', ...grid,
      '273-316', '316-353', '353-382', ...tail('')],
    [last[0], ...last.slice(1), `505-534|${number}`]
  ];
}

function page(gost, form, body, cls) {
  return `<article class="page"><div class="caption"><span>${gost}</span><span>${form}</span></div><div class="${cls || 'form'}">${body}</div></article>`;
}

function operation(o) {
  const W = 534, l = o.flush ? 'flush' : '';
  const sign = text => [`0-64|${text}|${l}`, '64-143', '143-179', '179-205'];
  let html = strip(stamp(true, o.sheet, [18, '0-382', '382-472', '472-505']), W);
  html += strip([
    [10, ...sign('Разработал'), '205-285|||3', '285-379|||3', '379-449|||3', `449-534|${o.code}|x r2|3`],
    [10, ...sign('Проверил')],
    [10, ...sign('')],
    [10, ...sign(''), '205-458|Втулка|x|2', '458-500|||2', `500-534|${o.op}|r2|2`],
    [9, ...sign('Н.Контр..')]
  ], W);
  html += strip([
    [10, '0-154|Наименование операции', '154-282|Материал', '282-337|Твердость', '337-365|Е<sub>в</sub>', '365-404|МД', '404-483|Профиль и размеры', '483-506|МЗ|b', '506-534|КОИД|b r2'],
    [17, `0-154|${o.name}|x`, '154-282|Сталь 45 ГОСТ 1050-88|x', '282-337|143...229НВ|a', '337-365|кг', '365-404|1,32|a', '404-483|Поковка Ø104×59', '483-506|2,05|a', '506-534|1|r2'],
  ], W);
  html += strip([
    [10, '0-154|Оборудование, устройства ЧПУ', '154-282|Обозначение программы', '282-315|Т<sub>о</sub>', '315-351|Т<sub>в</sub>', '351-383|Т<sub>п.з.</sub>', '383-414|Т<sub>шт.к.</sub>', '414-534|СОЖ|r2'],
    [19, `0-154|${o.machine}|x b2`, '154-282||b2', `282-315|${o.t[0]}|a b2`, `315-351|${o.t[1]}|a b2`, `351-383|${o.t[2]}|a b2`, `383-414|${o.t[3]}|a b2`, '414-534|Эмульсия|a r2 b2']
  ], W);
  html += strip([[13, '0-24|Р', '24-203', '203-254|ПИ', '254-320|D или В', '320-373|L', '373-401|t', '401-434|<mark>i</mark>', '434-476|S', '476-505|n', '505-534|V']], W);
  const h = [13, 13, 14, 13, 13, 14, 13, 13, 14, 13, 13, 14];
  const v = ['254-320', '320-373', '373-401', '401-434', '434-476', '476-505'];
  html += strip(o.rows.map(([tag, data], i) => {
    const head = `0-24|${tag}|${i < 11 ? 'bd' : ''}`;
    if (!Array.isArray(data)) return [h[i], head, `24-534|${data || ''}|lt`];
    return [h[i], head, '24-254||rn', ...v.map((c, n) => `${c}|${data[n]}|rn`), `505-534|${data[6]}`];
  }), W);
  html += strip([[17, '0-41|ОК', '41-534|ОПЕРАЦИОННАЯ КАРТА МЕХАНИЧЕСКОЙ ОБРАБОТКИ|x a']], W);
  return page('ГОСТ 3.1404-86', 'Форма 3', html);
}

function continuation() {
  const W = 534;
  let html = strip(stamp(false, '9', [18, '0-414', '414-505'], true), W);
  const c = ['27-46', '46-65', '65-108', '108-150', '150-178', '178-200', '200-221', '221-268', '268-306', '306-335'];
  html += strip([
    [10, '0-27|||3', ...c, '335-443||box|3', '443-534|6014000003|x box nl|3'],
    [10, c[0] + '||ln', ...c.slice(1)],
    [10, c[0] + '||ln', ...c.slice(1)]
  ], W);
  html += strip([[9, '0-23|Р|b2', '23-159||b2', '159-192||b2', '192-225||b2', '225-258|ПИ|b2', '258-316|D или В|b2', '316-358|L|b2', '358-386|t|b2', '386-410|<mark>i</mark>|b2', '410-457|S|b2', '457-490|n|b2', '490-534|V|b2']], W);
  const rows = {
    1: ['80', '5', '4,0', '1', '0,1', '250', '62,8'], 5: ['54,5', '49', '1,0', '2', '0,4', '500', '85,6'],
    9: ['65', '8', '2,5', '2', '0,4', '500', '102,1'], 13: ['55', '49', '0,25', '1', '0,1', '250', '43,2'],
    3: '4. Расточить отверстие предварительно и окончательно, выдерживая размер Ø54,5 Н11.',
    4: '&nbsp;РИ: резец расточной 2141-0056 ГОСТ 18883-73;&nbsp; СИ: Нутромер НИ-80 ГОСТ 868-82',
    7: '5. Расточить отверстие и фаску, выдерживая размеры 9,10,11.',
    8: '&nbsp;РИ: резец расточной 2141-0056 ГОСТ 18883-73;&nbsp; СИ: Штангенциркуль ШЦ-I-150-0,05 ГОСТ 166-80',
    11: '6. Развернуть отверстие, выдерживая размер 12.',
    12: 'РИ: Развертка насадная Ø55 ГОСТ 1672-80;&nbsp; СИ: Калибр-пробка гладкий ГОСТ 14810-69',
    15: 'Б. Открепить заготовку, снять и уложить в тару.'
  };
  const tags = ['Р01', '02', 'О03', 'Т04', 'Р05', '06', 'О07', 'Т08', 'Р09', '10', 'О11', 'Т12', 'Р13', '14', 'О15', '16', '17', '18', '19'];
  const v = ['258-316', '316-358', '358-386', '386-410', '410-457', '457-490', '490-534'];
  html += strip(tags.map((tag, i) => {
    const d = rows[i + 1] || '', nums = Array.isArray(d), end = i === 18 ? ' b2' : '';
    return [i % 2 ? 14 : (i === 18 ? 14 : 13), `0-23|${tag}|${end ? '' : 'bd'}`, `23-225|${nums ? '' : d}|lt rt${end}`, `225-258||rt${end}`,
      ...v.map((c, n) => `${c}|${nums ? d[n] : ''}|${n < 6 ? 'rt' : ''}${end}`)];
  }), W);
  return page('ГОСТ 3.1404-86', 'Форма 3а', html);
}

function sketch(o) {
  const W = 536;
  let html = strip(stamp(false, o.sheet, [24, '0-259', '259-387', '387-477', '477-505']), W);
  const sign = t => [`0-47|${t}|lt`, '47-104', '104-150', '150-180'];
  html += strip([
    [10, ...sign('<mark>Разраб.</mark>'), '180-259|||3', '259-369||box|3', '369-448||box nl|3', `448-534|${o.code}|x box nl|3`],
    [8, ...sign('<mark>Провер.</mark>')],
    [8, ...sign('')],
    [10, ...sign(''), '180-213|||2', '213-453|Втулка|m b|2', '453-473|||2', '473-493|||2', '493-513|||2', `513-534|${o.op}||2`],
    [8, ...sign('Н.контр.')]
  ], W);
  html += strip([[243, '0-534|' + document.getElementById(o.drawing).innerHTML + '|bn']], W, 'area');
  html += strip([[10, '0-42|К.Э.|td', '42-534|Карта эскизов|m ts']], W);
  return page('ГОСТ 3.1105-84', 'Форма 7', html, 'sheet');
}

document.getElementById('pages').innerHTML = [
  operation({ sheet: 3, code: '6014000001', op: '005', name: 'Токарно-револьверная', machine: '1А340', t: ['4,42', '3,23', '26', '7,94'], rows: [
    ['О01', 'А. Установить заготовку и закрепить.'],
    ['Т02', 'ПР: патрон <mark>трехкулачковый</mark> 7102-0072 ГОСТ 24351-80'],
    ['О03', '1. Подрезать торцы, выдерживая размеры 1,2.'],
    ['Т04', 'РИ: резец подрезной 2112-0031 ГОСТ 18871-73;&nbsp; СИ: Штангенциркуль ШЦ I-150-0,05 ГОСТ 166-80'],
    ['Р05', ['104', '20', '2,0', '2', '0,4', '355', '115,9']],
    ['06'],
    ['О07', '2. Точить ступени предварительно и окончательно, выдерживая размеры 2,3,4,5,6.'],
    ['Т08', '&nbsp;РИ: резец проходной упорный Т15К6 2103-0017 ГОСТ 18879-73; СИ: Штангенциркуль ШЦ&nbsp; I-150-0,05 ГОСТ 166-80'],
    ['Р09', ['84', '50', '1,0', '2', '0,2', '355', '93,6']],
    ['10'],
    ['О11', '3. Точить канавку, выдерживая размеры 2,7,8.'],
    ['Т12', 'РИ: резец <mark>канавочный</mark> Т15К6 2130-0017 ГОСТ 18884-73;&nbsp; СИ: Штангенциркуль ШЦ-I-150-0,05 ГОСТ 166-80; Калибр специальный накладной.']
  ] }),
  continuation(),
  sketch({ sheet: 5, code: '2014000001', op: '005', drawing: 'sketch-1' }),
  operation({ sheet: 6, code: '6014000002', op: '010', name: 'Токарно-револьверная', machine: '16Б20П', t: ['0,28', '0,2', '20', '0,57'], rows: [
    ['О01', 'А. Установить заготовку и закрепить.'],
    ['Т02', 'ПР: оправка консольная разжимная, кулачковая'],
    ['О03', '1. Подрезать торец, выдерживая размер 1.'],
    ['Т04', 'РИ: резец подрезной 2112-0031 ГОСТ 18871-73;&nbsp; СИ: Штангенциркуль ШЦ I-150-0,05 ГОСТ 166-80'],
    ['Р05', ['104', '25', '2,0', '1', '0,4', '355', '115,9']],
    ['06'],
    ['О07', '2. Точить ступень и фаски, выдерживая размеры 2,3,4'],
    ['Т08', '&nbsp;РИ: резец проходной Т15К6 2103-0017 ГОСТ 18878-73; СИ: Штангенциркуль ШЦ I-150-0,05 ГОСТ 166-80; <mark>фаскомер</mark>'],
    ['Р09', ['104', '15', '2,0', '1', '0,4', '355', '115,9']],
    ['10'],
    ['О11', 'Б. Открепить заготовку, снять и уложить в тару.'],
    ['12']
  ] }),
  sketch({ sheet: 7, code: '2014000002', op: '010', drawing: 'sketch-2' }),
  operation({ flush: true, sheet: 8, code: '6014000003', op: '015', name: 'Горизонтально-фрезерная', machine: '6Н81', t: ['2,3', '1,8', '24', '4,4'], rows: [
    ['О01', 'А. Установить заготовку и закрепить.'],
    ['Т02', 'ПР: универсальная делительная головка УДГ-Д250'],
    ['О03', '1. Фрезеровать последовательно 4 паза, выдерживая размеры 1,2.'],
    ['Т04', 'РИ: фреза дисковая пазовая В=10 мм, Ø80 мм ГОСТ 3964-69;&nbsp; СИ: Штангенциркуль ШЦ I-150-0,05 ГОСТ 166-80'],
    ['Р05', ['80', '70', '2,5', '8', '0,64', '380', '95,5']],
    ['06'],
    ['О07', 'Б. Открепить заготовку, снять и уложить в тару.'],
    ['08'], ['09'], ['10'], ['11'], ['12']
  ] }),
  '<article class="page"></article>', '<article class="page"></article>', '<article class="page"></article>'
].join('');
```
